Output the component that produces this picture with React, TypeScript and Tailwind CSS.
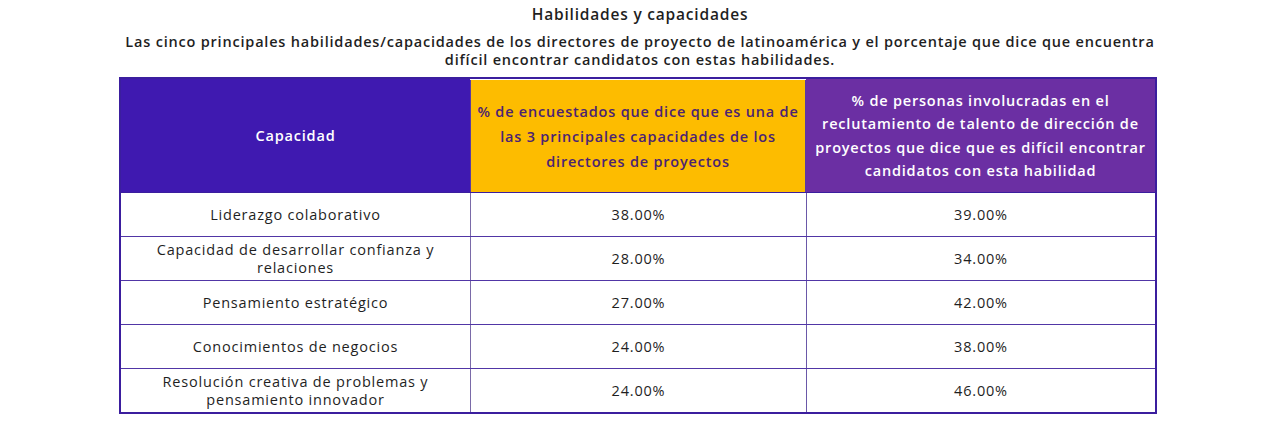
const rows = [
  { name: ["Liderazgo colaborativo"], a: "38.00%", b: "39.00%" },
  { name: ["Capacidad de desarrollar confianza y", "relaciones"], a: "28.00%", b: "34.00%" },
  { name: ["Pensamiento estratégico"], a: "27.00%", b: "42.00%" },
  { name: ["Conocimientos de negocios"], a: "24.00%", b: "38.00%" },
  { name: ["Resolución creativa de problemas y", "pensamiento innovador"], a: "24.00%", b: "46.00%" },
];

export default function App() {
  return (
    <div className="h-[429px] w-[1280px] bg-white font-['Open_Sans',sans-serif] tracking-[0.05em] text-[#1f1f1f]">
      <div className="pt-[5px] text-center">
        <h1 className="text-[15.5px] font-semibold leading-[18px]">Habilidades y capacidades</h1>
        <p className="mt-[10px] text-[14.5px] font-semibold leading-[18px]">
          Las cinco principales habilidades/capacidades de los directores de proyecto de latinoamérica y el porcentaje que dice que encuentra
          <br />
          difícil encontrar candidatos con estas habilidades.
        </p>
      </div>

      <div className="ml-[119px] mt-[8px] w-[1038px] border-[2.5px] border-[#3b1e9e]">
        <div className="grid h-[113px] grid-cols-[349px_336px_1fr] text-center text-[14.5px] font-semibold">
          <div className="flex items-center justify-center bg-[#3f19b0] text-white">Capacidad</div>
          <div className="mt-[1px] flex items-center justify-center border-x border-[#5a3aa0] bg-[#fdbc00] leading-[25px] text-[#4b2373]">
            <p>
              % de encuestados que dice que es una de
              <br />
              las 3 principales capacidades de los
              <br />
              directores de proyectos
            </p>
          </div>
          <div className="flex items-center justify-center bg-[#6b2fa3] leading-[23.5px] text-white">
            <p>
              % de personas involucradas en el
              <br />
              reclutamiento de talento de dirección de
              <br />
              proyectos que dice que es difícil encontrar
              <br />
              candidatos con esta habilidad
            </p>
          </div>
        </div>
        {rows.map((r, i) => (
          <div
            key={r.a + r.b}
            className={`grid h-[44px] grid-cols-[349px_336px_1fr] text-center text-[14.5px] font-medium leading-[18px] ${
              i === 0 ? "border-t-[1.5px] border-[#3b1e9e]" : "border-t-[1.5px] border-[#5136a6]"
            }`}
          >
            <div className="flex items-center justify-center">
              <p>
                {r.name.map((line, j) => (
                  <span key={line}>
                    {j > 0 && <br />}
                    {line}
                  </span>
                ))}
              </p>
            </div>
            <div className="flex items-center justify-center border-l-[1.5px] border-[#7a6aa8]">{r.a}</div>
            <div className="flex items-center justify-center border-l-[1.5px] border-[#6a58a8]">{r.b}</div>
          </div>
        ))}
      </div>
    </div>
  );
}
